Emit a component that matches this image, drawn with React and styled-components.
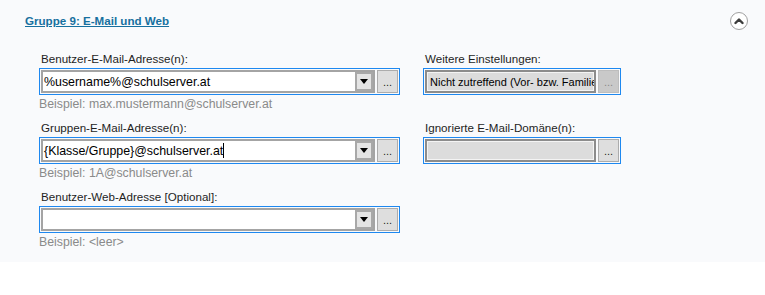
import React from 'react'
import styled, { createGlobalStyle } from 'styled-components'

const GlobalStyle = createGlobalStyle`
  body {
    margin: 0;
    background: #ffffff;
    font-family: "Liberation Sans", Arial, sans-serif;
  }
`

const Panel = styled.section`
  background: #f9fafc;
  padding: 12px 17px 13px 25px;
`

const Header = styled.div`
  display: flex;
  align-items: center;
  justify-content: space-between;
  height: 18px;
`

const Title = styled.a`
  font-size: 11.6px;
  font-weight: bold;
  line-height: 14px;
  color: #17709f;
  text-decoration: underline;
  cursor: pointer;
`

const CollapseButton = styled.div`
  width: 18px;
  height: 18px;
  box-sizing: border-box;
  border: 1px solid #a0a0a0;
  border-radius: 50%;
  background: #ffffff;
  display: flex;
  align-items: center;
  justify-content: center;
`

const Grid = styled.div`
  display: grid;
  grid-template-columns: 361px 198px;
  column-gap: 23px;
  row-gap: 10px;
  margin-top: 22px;
  padding-left: 14px;
  align-items: start;
`

const Field = styled.div`
  display: flex;
  flex-direction: column;
`

const Label = styled.label`
  font-size: 11.6px;
  line-height: 14px;
  color: #1e1e1e;
  padding-left: 2px;
  margin-bottom: 2px;
  white-space: nowrap;
`

const Frame = styled.div`
  display: flex;
  gap: 2px;
  height: 27px;
  box-sizing: border-box;
  border: 1px solid #1e88f0;
  padding: 1px;
`

const Combo = styled.div`
  flex: 1;
  min-width: 0;
  display: flex;
  align-items: center;
  box-sizing: border-box;
  border: 2px solid ${(p) => (p.disabled ? '#8c8c8c' : '#a4a4a4')};
  box-shadow: ${(p) => (p.disabled ? 'inset 0 0 0 1px #f4f4f4' : 'none')};
  background: ${(p) => (p.disabled ? '#dcdcdc' : '#ffffff')};
  overflow: hidden;
`

const Value = styled.div`
  flex: 1;
  min-width: 0;
  overflow: hidden;
  text-overflow: clip;
  white-space: nowrap;
  padding-left: ${(p) => (p.small ? '3px' : '1px')};
  font-size: ${(p) => (p.small ? '11px' : '12.4px')};
  line-height: 18px;
  color: #000000;
`

const Caret = styled.span`
  display: inline-block;
  width: 1px;
  height: 15px;
  background: #000000;
  vertical-align: -3px;
`

const ArrowButton = styled.div`
  width: 18px;
  height: 100%;
  box-sizing: border-box;
  border: 2px solid #a8a8a8;
  background: #e4e4e4;
  display: flex;
  align-items: center;
  justify-content: center;
`

const DotsButton = styled.div`
  width: 21px;
  box-sizing: border-box;
  border: 1px solid ${(p) => (p.disabled ? '#bdbdbd' : '#acacac')};
  background: ${(p) => (p.disabled ? '#c9c9c9' : '#dedede')};
  color: ${(p) => (p.disabled ? '#8a8a8a' : '#1e1e1e')};
  font-size: 11px;
  line-height: 20px;
  text-align: center;
  padding-top: 1px;
`

const Example = styled.div`
  font-size: 12.3px;
  line-height: 14px;
  color: #8a8a8a;
  margin-top: 2px;
  white-space: nowrap;
`

function DropArrow() {
  return (
    <svg width="8" height="5" viewBox="0 0 8 5">
      <path d="M0 0 H8 L4 5 Z" fill="#000" />
    </svg>
  )
}

function ChevronUp() {
  return (
    <svg width="10" height="8" viewBox="0 0 10 8">
      <path
        d="M1.5 6 L5 2.5 L8.5 6"
        fill="none"
        stroke="#3c3c3c"
        strokeWidth="2.4"
        strokeLinecap="round"
        strokeLinejoin="round"
      />
    </svg>
  )
}

function InputField({ label, value, example, caret, disabled, dotsDisabled, noArrow }) {
  return (
    <Field>
      <Label>{label}</Label>
      <Frame>
        <Combo disabled={disabled}>
          <Value small={disabled}>
            {value}
            {caret && <Caret />}
          </Value>
          {!noArrow && (
            <ArrowButton>
              <DropArrow />
            </ArrowButton>
          )}
        </Combo>
        <DotsButton disabled={dotsDisabled}>...</DotsButton>
      </Frame>
      {example && <Example>{example}</Example>}
    </Field>
  )
}

export default function App() {
  return (
    <>
      <GlobalStyle />
      <Panel>
        <Header>
          <Title>Gruppe 9: E-Mail und Web</Title>
          <CollapseButton>
            <ChevronUp />
          </CollapseButton>
        </Header>
        <Grid>
          <InputField
            label="Benutzer-E-Mail-Adresse(n):"
            value="%username%@schulserver.at"
            example="Beispiel: max.mustermann@schulserver.at"
          />
          <InputField
            label="Weitere Einstellungen:"
            value="Nicht zutreffend (Vor- bzw. Familie"
            disabled
            dotsDisabled
            noArrow
          />
          <InputField
            label="Gruppen-E-Mail-Adresse(n):"
            value="{Klasse/Gruppe}@schulserver.at"
            example="Beispiel: 1A@schulserver.at"
            caret
          />
          <InputField
            label="Ignorierte E-Mail-Domäne(n):"
            value=""
            disabled
            noArrow
          />
          <InputField
            label="Benutzer-Web-Adresse [Optional]:"
            value=""
            example="Beispiel: <leer>"
          />
        </Grid>
      </Panel>
    </>
  )
}
